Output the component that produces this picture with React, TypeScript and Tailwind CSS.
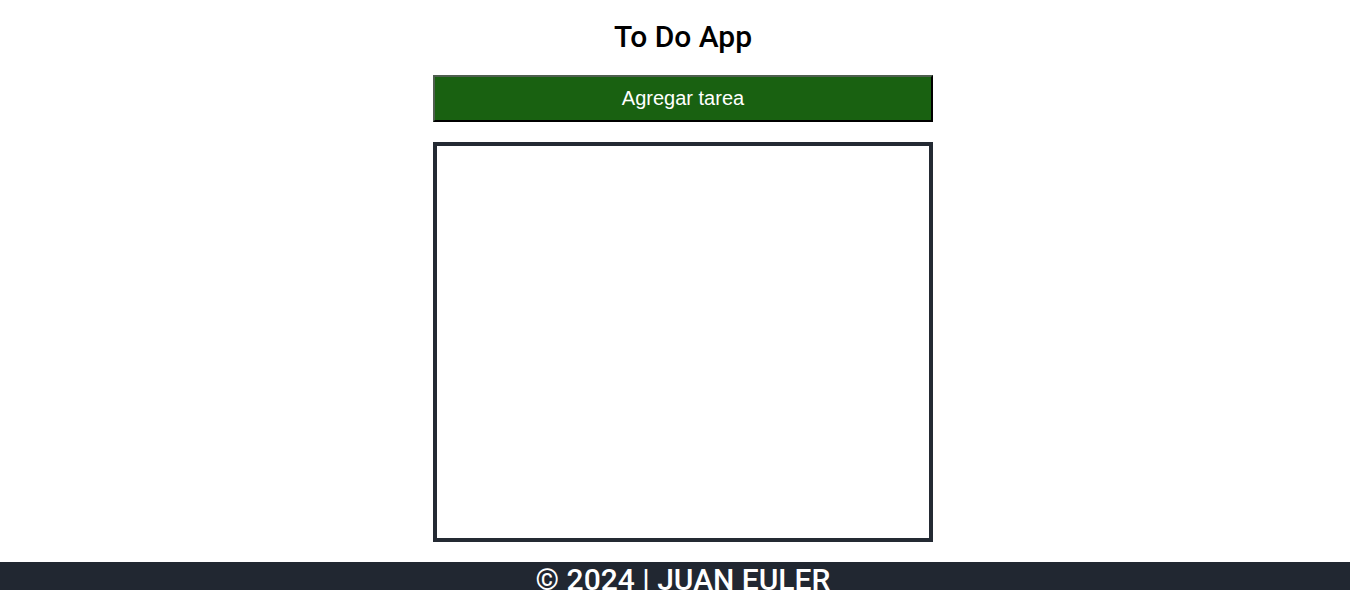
export default function App() {
  return (
    <div className="min-h-screen flex flex-col bg-white pl-4" style={{ fontFamily: "Roboto, sans-serif" }}>
      <main className="flex flex-col items-center">
        <h1 className="h-[75px] pt-[19px] text-[30px] leading-[36px] font-medium text-black">To Do App</h1>
        <button
          type="button"
          className="w-[500px] h-[47px] pb-px bg-[#196111] text-white text-[20px] border-2 border-t-[#4f5f4f] border-l-[#4f5f4f] border-b-black border-r-black"
          style={{ fontFamily: "'Liberation Sans', Arial, sans-serif" }}
        >
          Agregar tarea
        </button>
        <div className="mt-5 w-[500px] h-[400px] border-4 border-[#242a33]"></div>
      </main>
      <footer className="mt-5 -ml-4 pl-4 bg-[#212731] text-white text-center">
        <p className="text-[30px] leading-[36px] font-medium">© 2024 | JUAN EULER</p>
      </footer>
    </div>
  );
}
